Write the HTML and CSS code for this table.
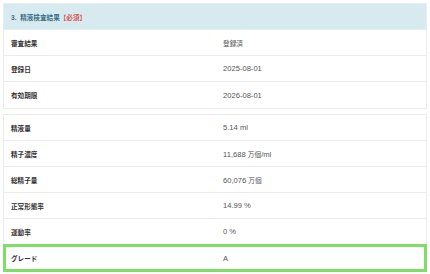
FILE: index.html
```html
<!DOCTYPE html>
<html lang="ja">
<head>
<meta charset="utf-8">
<link rel="stylesheet" href="styles.css">
</head>
<body>
<div class="page">
  <div class="card">
    <div class="card-head">3.&nbsp; 精液検査結果<span class="req">【必須】</span></div>
    <div class="row"><div class="label">審査結果</div><div class="value"><span class="jp">登録済</span></div></div>
    <div class="row"><div class="label">登録日</div><div class="value">2025-08-01</div></div>
    <div class="row last"><div class="label">有効期限</div><div class="value">2026-08-01</div></div>
  </div>
  <div class="card">
    <div class="row"><div class="label">精液量</div><div class="value">5.14 ml</div></div>
    <div class="row"><div class="label">精子濃度</div><div class="value">11,688 <span class="jp">万個</span>/ml</div></div>
    <div class="row"><div class="label">総精子量</div><div class="value">60,076 <span class="jp">万個</span></div></div>
    <div class="row"><div class="label">正常形態率</div><div class="value">14.99 %</div></div>
    <div class="row"><div class="label">運動率</div><div class="value">0 %</div></div>
    <div class="row last highlight"><div class="label">グレード</div><div class="value">A</div></div>
  </div>
</div>
</body>
</html>
```
FILE: styles.css
```css
html, body {
  margin: 0;
  padding: 0;
  background: #ffffff;
}
body {
  font-family: "Liberation Sans", "Noto Sans CJK JP", sans-serif;
  font-size: 8px;
  color: #555;
}
.page {
  padding: 3px 3px 0 3px;
  display: flex;
  flex-direction: column;
  gap: 5px;
}
.card {
  border: 1px solid #ececec;
  background: #fff;
}
.card-head {
  height: 25px;
  background: #d6eaef;
  display: flex;
  align-items: center;
  padding-left: 7px;
  color: #3c6f86;
  font-weight: bold;
  font-size: 6.6px;
  border-bottom: 1px solid #e4eef1;
}
.req {
  color: #d9534f;
  font-weight: bold;
}
.row {
  height: 26px;
  box-sizing: border-box;
  display: grid;
  grid-template-columns: 212px 1fr;
  align-items: center;
  border-bottom: 1px solid #ececec;
}
.row.last {
  border-bottom: none;
}
.label {
  padding-left: 7px;
  font-weight: bold;
  color: #333;
  font-size: 6.6px;
}
.value {
  padding-left: 7px;
  color: #555;
  font-size: 7.6px;
}
.jp {
  font-size: 6.7px;
}
.highlight {
  outline: 3px solid #7ddf64;
  outline-offset: -2px;
}
```
